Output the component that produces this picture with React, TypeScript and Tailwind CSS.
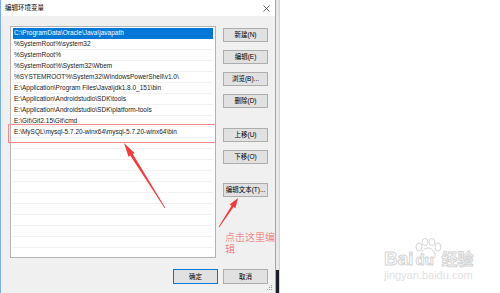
const paths = [
  'C:\\ProgramData\\Oracle\\Java\\javapath',
  '%SystemRoot%\\system32',
  '%SystemRoot%',
  '%SystemRoot%\\System32\\Wbem',
  '%SYSTEMROOT%\\System32\\WindowsPowerShell\\v1.0\\',
  'E:\\Application\\Program Files\\Java\\jdk1.8.0_151\\bin',
  'E:\\Application\\Androidstudio\\SDK\\tools',
  'E:\\Application\\Androidstudio\\SDK\\platform-tools',
  'E:\\Git\\Git2.15\\Git\\cmd',
  'E:\\MySQL\\mysql-5.7.20-winx64\\mysql-5.7.20-winx64\\bin',
]

const rows = [...paths, ...Array(11).fill('')]

function WinButton({ label, className = '' }: { label: string; className?: string }) {
  return (
    <div className={`h-[14px] w-[45px] flex items-center justify-center bg-[#e1e1e1] border border-[#adadad] text-[6.5px] text-black ${className}`}>
      {label}
    </div>
  )
}

function Dialog() {
  return (
    <div className="relative w-[276px] h-full flex flex-col border-l border-r border-[#7ab0e6] bg-[#f0f0f0]">
      <div className="h-[16px] bg-white flex items-center justify-between pl-[4px] pr-[5px]">
        <span className="text-[6.5px] text-black">编辑环境变量</span>
        <svg width="7" height="7" viewBox="0 0 7 7">
          <path d="M0.5 0.5 L6.5 6.5 M6.5 0.5 L0.5 6.5" stroke="#444" strokeWidth="0.8" />
        </svg>
      </div>

      <div className="flex pl-[9px] pt-[10px]">
        <div className="w-[206px] h-[232px] border border-[#b4b4b4] bg-white px-[2px] pt-[1px] overflow-hidden">
          {rows.map((p, i) => (
            <div
              key={i}
              className={`h-[11px] pl-[1px] flex items-center text-[6.5px] whitespace-nowrap border-b ${
                i === 0 ? 'bg-[#0078d7] text-white border-[#0078d7]' : 'text-[#1a1a1a] border-[#f2f2f2]'
              }`}
            >
              {p}
            </div>
          ))}
        </div>

        <div className="ml-[7px] flex flex-col">
          <WinButton label="新建(N)" className="mt-[2px]" />
          <WinButton label="编辑(E)" className="mt-[8px]" />
          <WinButton label="浏览(B)..." className="mt-[8px]" />
          <WinButton label="删除(D)" className="mt-[8px]" />
          <WinButton label="上移(U)" className="mt-[20px]" />
          <WinButton label="下移(O)" className="mt-[8px]" />
          <WinButton label="编辑文本(T)..." className="mt-[19px]" />
        </div>
      </div>

      <div className="flex justify-end gap-[5px] pr-[7px] mt-[11px]">
        <div className="h-[15px] w-[45px] flex items-center justify-center bg-[#e1e1e1] border border-[#0078d7] text-[6.5px] text-black">
          确定
        </div>
        <div className="h-[15px] w-[45px] flex items-center justify-center bg-[#e1e1e1] border border-[#adadad] text-[6.5px] text-black">
          取消
        </div>
      </div>

      <svg className="absolute right-[2px] bottom-[2px]" width="6" height="6" viewBox="0 0 6 6">
        <rect x="4" y="0" width="1" height="1" fill="#a0a0a0" />
        <rect x="2" y="2" width="1" height="1" fill="#a0a0a0" />
        <rect x="4" y="2" width="1" height="1" fill="#a0a0a0" />
        <rect x="0" y="4" width="1" height="1" fill="#a0a0a0" />
        <rect x="2" y="4" width="1" height="1" fill="#a0a0a0" />
        <rect x="4" y="4" width="1" height="1" fill="#a0a0a0" />
      </svg>
    </div>
  )
}

function Watermark() {
  return (
    <div className="absolute left-[384px] top-[238px] flex flex-col">
      <div className="flex items-end leading-none">
        <span className="text-[19px] font-bold text-white [-webkit-text-stroke:1px_#d6d6d6]">Bai</span>
        <div className="relative w-[26px] h-[30px]">
          <svg className="absolute left-0 top-0" width="28" height="22" viewBox="0 0 28 22">
            <g fill="white" stroke="#d6d6d6" strokeWidth="1">
              <ellipse cx="5" cy="9" rx="3" ry="4" />
              <ellipse cx="11" cy="4" rx="3" ry="3.5" />
              <ellipse cx="18" cy="4" rx="3" ry="3.5" />
              <ellipse cx="24" cy="9" rx="3" ry="4" />
              <path d="M14 10 C9 10 6 16 7 19 C8 21 11 20 14 20 C17 20 20 21 21 19 C22 16 19 10 14 10 Z" />
            </g>
          </svg>
          <span className="absolute left-[2px] bottom-[1px] text-[15px] font-bold text-white [-webkit-text-stroke:1px_#d6d6d6]">du</span>
        </div>
        <span className="ml-[2px] mb-[2px] text-[16px] font-bold text-white [-webkit-text-stroke:1px_#d6d6d6] font-['Noto_Sans_CJK_SC',sans-serif]">
          经验
        </span>
      </div>
      <span className="mt-[2px] text-[11px] leading-none text-[#e2e2e2]">jingyan.baidu.com</span>
    </div>
  )
}

export default function App() {
  return (
    <div className="relative flex w-[500px] h-[293px] overflow-hidden bg-white font-['Liberation_Sans','Noto_Sans_CJK_SC',sans-serif]">
      <Dialog />

      <div className="w-[4px] h-full flex flex-col bg-[#e8e8e8] border-r border-[#d2d2d2]">
        <div className="flex-1" />
        <div className="h-[23px] bg-[#1c1f2a]" />
      </div>

      <div className="flex-1 h-full bg-white" />

      <Watermark />

      {/* annotations */}
      <div className="absolute left-[8px] top-[124px] w-[208px] h-[19px] border border-[#f08a8a]" />

      <svg className="absolute left-0 top-0 pointer-events-none" width="500" height="293" viewBox="0 0 500 293">
        <polygon
          fill="#f03c3c"
          points="124,143 134.5,152.9 132.8,154 165.3,207.8 164.7,208.2 130.2,155.6 128.5,156.7"
        />
        <polygon
          fill="#f03c3c"
          points="238,198 235.4,208.3 233.5,207.1 219.3,227.2 218.7,226.8 231.5,205.7 229.6,204.5"
        />
      </svg>

      <div className="absolute left-[225px] top-[231px] w-[52px] text-[10px] leading-[12px] text-[#f25f5f] font-light font-['Noto_Sans_CJK_SC',sans-serif]">
        点击这里编辑
      </div>
    </div>
  )
}
